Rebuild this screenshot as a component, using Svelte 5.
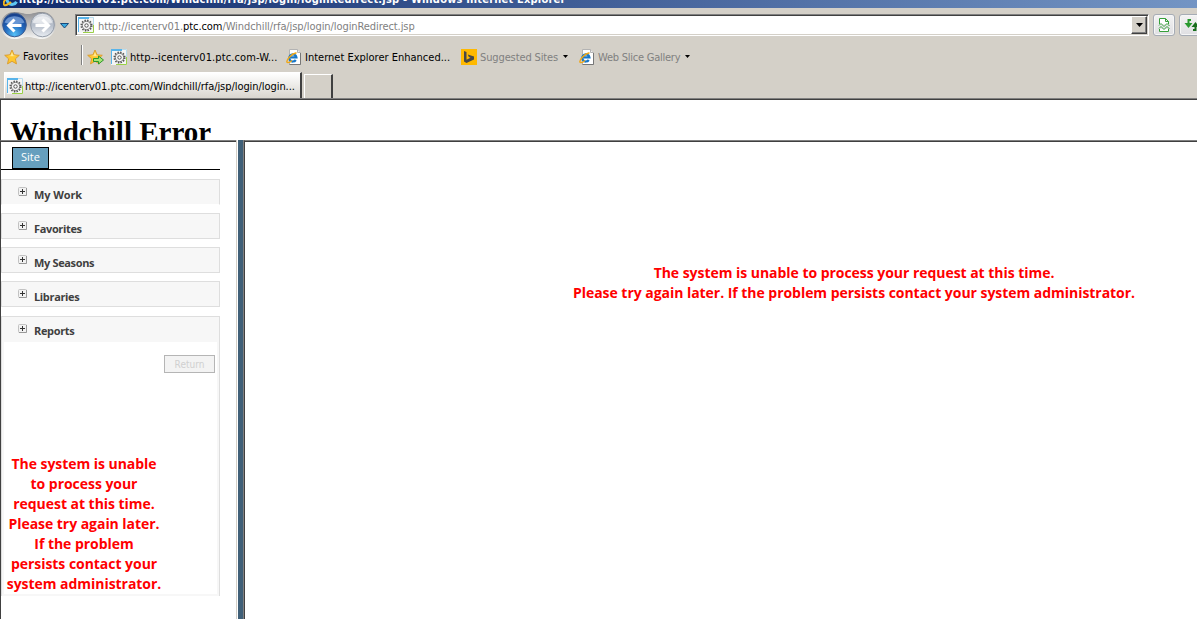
<script>
	// Sidebar sections, all collapsed except the last one
	const sections = ['My Work', 'Favorites', 'My Seasons', 'Libraries'];

	const host = 'ptc.com';
</script>

{#snippet ieIcon()}
	<svg class="icon" width="16" height="16" viewBox="0 0 16 16">
		<path d="M3.5 .5h8l3 3v12h-11z" fill="#fff" stroke="#b3b3b3" />
		<path d="M14.5 4v11.5h-11" fill="none" stroke="#777" />
		<path d="M11.5 .5v3h3" fill="#eee" stroke="#b3b3b3" />
		<path d="M9.8 11a3.6 3.6 0 1 1 .6-2.700H4" fill="none" stroke="#1877c8" stroke-width="2.2" />
		<path d="M1 13.500C0 11 5 5 10.500 3.800" fill="none" stroke="#f0a818" stroke-width="1.5" />
		<path d="M1 13.500c2 .5 4-1 5-2" fill="none" stroke="#f0a818" stroke-width="1.2" />
	</svg>
{/snippet}

{#snippet gearIcon()}
	<svg class="icon" width="16" height="16" viewBox="0 0 16 16">
		<path d="M0 0h16v16H0z" fill="#f5f5f5" />
		<path d="M0 1h11" stroke="#59b4ea" stroke-width="2" />
		<path d="M.5 15V1" fill="none" stroke="#59b4ea" />
		<path d="M11 .5h4.500V8" fill="none" stroke="#b8dced" />
		<path d="M15.500 8v7.500H5" fill="none" stroke="#9bd047" />
		<circle cx="8.500" cy="8.500" r="5.300" fill="none" stroke="#555" stroke-width="1.500" stroke-dasharray="1.500 1.275" />
		<circle cx="8.500" cy="8.500" r="4.200" fill="#f5f5f5" stroke="#666" stroke-width=".9" />
		<circle cx="8.500" cy="8.500" r="1.700" fill="#fff" stroke="#555" />
	</svg>
{/snippet}

{#snippet star()}
	<path d="M8 1l2.100 4.800 5.200.5-3.900 3.500 1.100 5.100L8 12.300l-4.500 2.600 1.100-5.100L.7 6.300l5.200-.5z" fill="#ffc72e" stroke="#d99a2b" stroke-width=".9" />
	<path d="M8 3l1.400 3.500 3.500.4-4.600.4-4.500-.4 2.800-.4z" fill="#ffe994" />
{/snippet}

{#snippet plusIcon()}
	<svg class="plus" width="9" height="9" viewBox="0 0 9 9">
		<rect x=".5" y=".5" width="8" height="8" rx="1" fill="#f2f2f2" stroke="#c2c2c2" />
		<path d="M8.500 1v7.500H1" fill="none" stroke="#999" />
		<path d="M2 4.500h5M4.500 2v5" stroke="#333" />
	</svg>
{/snippet}

{#snippet caret()}
	<svg class="caret" width="5" height="3" viewBox="0 0 5 3"><path d="M0 0h5L2.500 3z" fill="#000" /></svg>
{/snippet}

<div class="window">
	<div class="title-bar">
		<svg class="title-icon" width="16" height="16" viewBox="0 0 16 16">
			<path d="M13.500 10.700a5 5 0 1 1 .5-3.200H5" fill="none" stroke="#5dc5f3" stroke-width="3" />
			<path d="M1 14C-1 10 6 4 14 1.500M1 14c3 1 6-2 7-3" fill="none" stroke="#efb31e" stroke-width="2" />
		</svg>
		<span class="title-text">http://icenterv01.ptc.com/Windchill/rfa/jsp/login/loginRedirect.jsp - Windows Internet Explorer</span>
	</div>

	<!-- Back / forward buttons and the address field -->
	<div class="address-row">
		<svg class="nav" width="73" height="29" viewBox="0 0 73 29">
			<defs>
				<radialGradient id="back" cx=".5" cy=".9" r=".85">
					<stop offset="0" stop-color="#55c0f7" />
					<stop offset=".5" stop-color="#2268bd" />
					<stop offset="1" stop-color="#17408c" />
				</radialGradient>
				<linearGradient id="forward" x2="0" y2="1">
					<stop offset="0" stop-color="#e4e7ec" />
					<stop offset=".5" stop-color="#b5bdc9" />
					<stop offset="1" stop-color="#e9edf3" />
				</linearGradient>
				<linearGradient id="rim" x2="0" y2="1">
					<stop offset="0" stop-color="#8f9093" />
					<stop offset=".5" stop-color="#c0c0c2" />
					<stop offset="1" stop-color="#f7f7f5" />
				</linearGradient>
			</defs>
			<path d="M14 1c7 0 9 2 14 2s7-2 14-2a13 13 0 0 1 0 27c-6 0-9-2-14-2s-7 2-14 2A13 13 0 0 1 14 1z" fill="url(#rim)" />
			<circle cx="14.500" cy="14" r="11.800" fill="url(#back)" stroke="#3a5b91" />
			<path d="M4.500 11.500a10.500 9 0 0 1 20 0c-6 2-14 2-20 0z" fill="#8fb4e7" opacity=".65" />
			<path d="M21.500 14.500H9.500M14.500 8.500l-6 6 6 6" fill="none" stroke="#fff" stroke-width="3" />
			<circle cx="42.500" cy="14" r="11.800" fill="url(#forward)" stroke="#929ba8" />
			<path d="M32.500 11.500a10.500 9 0 0 1 20 0c-6 2-14 2-20 0z" fill="#fff" opacity=".55" />
			<path d="M35.500 14.500h12M42.500 8.500l6 6-6 6" fill="none" stroke="#fff" stroke-width="3" />
			<path d="M60.500 12.500h8l-4 4.500z" fill="#39a9e0" stroke="#174a7c" />
		</svg>
		<div class="address">
			{@render gearIcon()}
			<span class="url">http://icenterv01.<b>{host}</b>/Windchill/rfa/jsp/login/loginRedirect.jsp</span>
			<div class="drop"><svg width="7" height="4" viewBox="0 0 7 4"><path d="M0 0h7L3.500 4z" /></svg></div>
		</div>
		<div class="tool">
			<svg width="16" height="16" viewBox="0 0 16 16">
				<path d="M3.500 7V1.500h6l3 3V7M9.500 1.500v3h3M3.500 12v2.500h9V12" fill="#fff" stroke="#36a03a" />
				<path d="M3 8.500l2-2 3 3 3-3 2.500 2.500M3 11.500l2-2 3 3 3-3 2.500 2.500" fill="none" stroke="#36a03a" />
			</svg>
		</div>
		<div class="tool refresh">
			<svg width="18" height="16" viewBox="0 0 18 16">
				<path d="M8 3H5.500v4" fill="none" stroke="#2a9a2f" stroke-width="2" />
				<path d="M1.500 6h8l-4 5z" fill="#2a9a2f" />
				<path d="M10 13h2.500V9" fill="none" stroke="#196f1d" stroke-width="2" />
				<path d="M8.500 10h8l-4-5z" fill="#196f1d" />
			</svg>
		</div>
	</div>

	<div class="favorites-row">
		<svg class="icon" width="16" height="16" viewBox="0 0 16 16">{@render star()}</svg>
		<span class="fav-label">Favorites</span>
		<div class="separator"></div>
		<svg class="icon add" width="17" height="16" viewBox="0 0 17 16">
			{@render star()}
			<path d="M6.500 9.500h5v-2.500l5 4-5 4v-2.500h-5z" fill="#a4e575" stroke="#2d962b" />
		</svg>
		<div class="link first">
			{@render gearIcon()}
			<span>http--icenterv01.ptc.com-W...</span>
		</div>
		<div class="link second">
			{@render ieIcon()}
			<span>Internet Explorer Enhanced...</span>
		</div>
		<div class="link third">
			<svg class="icon" width="16" height="16" viewBox="0 0 16 16">
				<path d="M0 0h16v16H0z" fill="#ffb900" />
				<path d="M3 2l2.500 1v7.700L9.500 8.800 7.800 8 6.800 5.400 13 7.500v3L5.500 14 3 12.500z" fill="#484848" />
			</svg>
			<span class="muted">Suggested Sites</span>
			{@render caret()}
		</div>
		<div class="link fourth">
			{@render ieIcon()}
			<span class="muted">Web Slice Gallery</span>
			{@render caret()}
		</div>
	</div>

	<div class="tabs-row">
		<div class="tab">
			{@render gearIcon()}
			<span>http://icenterv01.ptc.com/Windchill/rfa/jsp/login/login...</span>
		</div>
		<div class="new-tab"></div>
	</div>

	<!-- Frameset: header on top, sidebar and main frame below -->
	<div class="header-frame">
		<h1>Windchill Error</h1>
	</div>

	<div class="frames">
		<div class="sidebar">
			<div class="site-row">
				<div class="site">Site</div>
			</div>
			{#each sections as name, i}
				<div class="section" class:open={i === 0}>
					{@render plusIcon()}
					<span>{name}</span>
				</div>
			{/each}
			<div class="reports">
				<div class="reports-head">
					{@render plusIcon()}
					<span>Reports</span>
				</div>
				<div class="reports-body">
					<button disabled>Return</button>
					<p class="error small">
						<span>The system is unable</span><br />
						<span>to process your</span><br />
						<span>request at this time.</span><br />
						<span>Please try again later.</span><br />
						<span>If the problem</span><br />
						<span>persists contact your</span><br />
						<span>system administrator.</span>
					</p>
				</div>
			</div>
		</div>
		<div class="splitter"></div>
		<div class="main-frame">
			<p class="error">
				The system is unable to process your request at this time.<br />
				Please try again later. If the problem persists contact your system administrator.
			</p>
		</div>
	</div>
</div>

<style>
	:global(body) {
		margin: 0;
		overflow: hidden;
	}

	.window {
		width: 1197px;
		height: 619px;
		display: flex;
		flex-direction: column;
		overflow: hidden;
		background: #d4d0c8;
		font-family: "DejaVu Sans Condensed", "DejaVu Sans", sans-serif;
		font-stretch: condensed;
		font-size: 11px;
		color: #000;
		white-space: nowrap;
	}

	.window * {
		box-sizing: border-box;
	}

	svg {
		display: block;
		flex-shrink: 0;
	}

	/* Title bar, only its bottom edge is visible */
	.title-bar {
		height: 8px;
		flex-shrink: 0;
		display: flex;
		align-items: flex-end;
		padding-left: 3px;
		overflow: hidden;
		background: linear-gradient(90deg, #0f2a6c, #a6caf0 150%);
		color: #fff;
		font-weight: bold;
	}

	.title-icon {
		margin-bottom: 1px;
	}

	.title-text {
		line-height: 14px;
		margin-bottom: 1px;
		letter-spacing: 0.2px;
	}

	.address-row {
		height: 33px;
		flex-shrink: 0;
		display: flex;
		align-items: flex-start;
		padding-top: 6px;
		overflow: hidden;
	}

	.nav {
		margin: -3px 2px 0 0;
	}

	.address {
		width: 1074px;
		height: 22px;
		flex-shrink: 0;
		display: flex;
		align-items: center;
		background: #fff;
		border: 1px solid #808080;
		border-right-color: #fff;
		border-bottom-color: #fff;
		box-shadow: inset 1px 1px #404040, inset -1px -1px #d4d0c8;
		padding: 0 1px 0 2px;
	}

	.url {
		margin: 2px 0 0 4px;
		color: #808080;
		letter-spacing: -0.08px;
	}

	.url b {
		font-weight: normal;
		color: #000;
	}

	.drop {
		width: 16px;
		height: 18px;
		margin-left: auto;
		display: flex;
		align-items: center;
		justify-content: center;
		background: #d4d0c8;
		border: 1px solid #fff;
		border-right-color: #404040;
		border-bottom-color: #404040;
		box-shadow: inset -1px -1px #808080;
	}

	.tool {
		width: 22px;
		height: 22px;
		flex-shrink: 0;
		margin-left: 4px;
		display: flex;
		align-items: center;
		justify-content: center;
		border: 1px solid #a6acb5;
		border-radius: 3px;
		background: linear-gradient(#f3f3f3, #dfdfe2);
		box-shadow: inset 0 0 0 1px #f6f6f6;
	}

	/* Runs past the right edge of the window */
	.refresh {
		width: 26px;
	}

	.favorites-row {
		height: 31px;
		flex-shrink: 0;
		display: flex;
		align-items: center;
		padding-left: 4px;
	}

	.fav-label {
		width: 54px;
		margin-left: 3px;
		letter-spacing: 0.1px;
	}

	.separator {
		width: 2px;
		height: 20px;
		margin: 0 4px 3px;
		background: linear-gradient(90deg, #808080 50%, #fff 50%);
	}

	.link {
		display: flex;
		align-items: center;
	}

	.link span {
		margin: 1px 0 0 3px;
	}

	.first {
		width: 175px;
		margin-left: 7px;
		letter-spacing: 0.1px;
	}

	.second {
		width: 175px;
	}

	.third {
		width: 118px;
		letter-spacing: -0.12px;
	}

	.fourth {
		letter-spacing: -0.24px;
	}

	.muted {
		color: #808080;
	}

	.caret {
		margin-left: 5px;
	}

	.tabs-row {
		height: 28px;
		flex-shrink: 0;
		display: flex;
		align-items: flex-end;
		padding-left: 4px;
		border-bottom: 1px solid #404040;
		box-shadow: inset 0 -1px #808080;
	}

	.tab {
		width: 298px;
		height: 26px;
		display: flex;
		align-items: center;
		padding-left: 2px;
		margin-bottom: 1px;
		border: 1px solid #fff;
		border-right: 2px solid #404040;
		border-bottom: 0;
		background: linear-gradient(#fff, #d9d6cf);
	}

	.tab span {
		margin: 1px 0 0 2px;
		letter-spacing: -0.06px;
	}

	.new-tab {
		width: 29px;
		height: 24px;
		margin: 0 0 1px 2px;
		border: 1px solid #fff;
		border-right: 2px solid #404040;
		border-bottom: 0;
	}

	.header-frame {
		height: 40px;
		flex-shrink: 0;
		overflow: hidden;
		background: #fff;
		border-left: 1px solid #404040;
	}

	h1 {
		margin: 16px 0 0 9px;
		font: bold 29px/33px "Liberation Serif", serif;
	}

	.frames {
		flex: 1;
		display: flex;
		min-height: 0;
	}

	.sidebar {
		width: 236px;
		border-left: 1px solid #404040;
		border-top: 1px solid #808080;
		box-shadow: inset 0 1px #404040;
		background: #fff;
		padding-right: 16px;
		font-family: "Open Sans", sans-serif;
		font-stretch: normal;
	}

	.site-row {
		height: 29px;
		padding: 6px 0 0 11px;
		border-bottom: 1px solid #000;
	}

	.site {
		width: 37px;
		height: 22px;
		border: 1px solid #000;
		background: #669fbe;
		color: #fff;
		font-size: 11px;
		line-height: 18px;
		text-align: center;
	}

	.section {
		height: 26px;
		margin-top: 8px;
		display: flex;
		padding-left: 16px;
		border: 1px solid #dedede;
		background: #f7f7f7;
		color: #404040;
		font-size: 11px;
		font-weight: bold;
		line-height: 30px;
		letter-spacing: -0.35px;
	}

	.section.open {
		margin-top: 9px;
		border-bottom-color: #fff;
		letter-spacing: -0.1px;
	}

	.plus {
		margin: 7px 7px 0 0;
	}

	.reports {
		height: 280px;
		margin-top: 9px;
		padding: 0 2px 2px;
		border: 1px solid #dedede;
		border-bottom: 0;
		background: #f7f7f7;
	}

	.reports-head {
		display: flex;
		height: 25px;
		padding-left: 14px;
		color: #404040;
		font-weight: bold;
		line-height: 28px;
		letter-spacing: -0.35px;
	}

	.reports-body {
		height: 252px;
		padding: 13px 2px 0;
		background: #fff;
	}

	button {
		display: block;
		width: 51px;
		height: 18px;
		margin-left: auto;
		padding: 1px 0 0;
		border: 1px solid #b5b5b5;
		background: #f3f3f3;
		color: #d0d0d0;
		font: 10px/15px "DejaVu Sans Condensed", "DejaVu Sans", sans-serif;
	}

	.error {
		margin: 0;
		color: #ff0000;
		font: bold 14px/20px "Open Sans", sans-serif;
		letter-spacing: -0.04px;
		text-align: center;
	}

	.small {
		width: 156px;
		margin: 81px 0 0;
	}

	.splitter {
		width: 8px;
		background: linear-gradient(90deg, #d4d0c8 1px, #fff 1px 2px, #406078 2px 7px, #808080 7px);
	}

	.main-frame {
		flex: 1;
		border-left: 1px solid #404040;
		border-top: 1px solid #808080;
		box-shadow: inset 0 1px #404040;
		background: #fff;
		padding: 122px 0 0 267px;
	}

	.main-frame .error {
		width: 684px;
	}
</style>
